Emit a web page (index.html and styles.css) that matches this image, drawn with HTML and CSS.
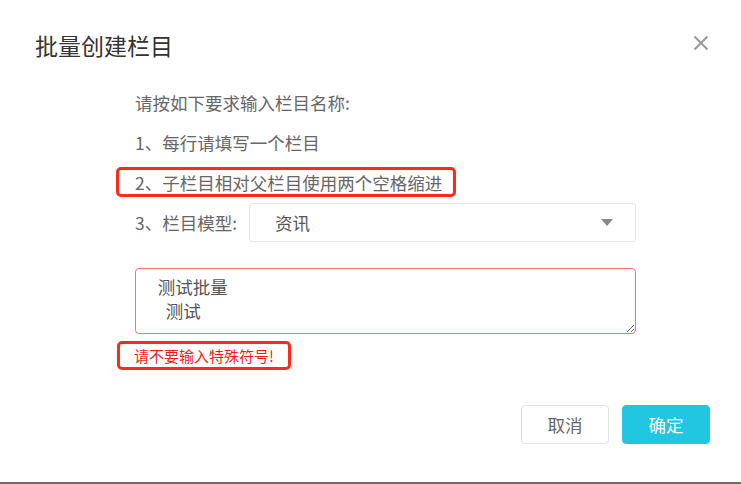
FILE: index.html
```html
<!DOCTYPE html>
<html lang="zh-CN">
<head>
<meta charset="utf-8">
<title>批量创建栏目</title>
<link rel="stylesheet" href="styles.css">
</head>
<body>
<div class="dialog">
  <header class="head">
    <h1 class="title">批量创建栏目</h1>
    <button class="close" aria-label="关闭">
      <svg width="16" height="16" viewBox="0 0 16 16"><path d="M1.5 1.5 L14.5 14.5 M14.5 1.5 L1.5 14.5" stroke="#999" stroke-width="2" fill="none"/></svg>
    </button>
  </header>
  <main class="body">
    <p class="line">请按如下要求输入栏目名称:</p>
    <p class="line">1、每行请填写一个栏目</p>
    <p class="line"><span class="mark mark-line">2、子栏目相对父栏目使用两个空格缩进</span></p>
    <div class="row">
      <span class="label">3、栏目模型:</span>
      <div class="select"><span class="select-text">资讯</span><i class="arrow"></i></div>
    </div>
    <textarea class="ta">  测试批量
    测试</textarea>
    <div class="err"><span class="mark mark-err">请不要输入特殊符号!</span></div>
  </main>
  <footer class="foot">
    <button class="btn btn-cancel">取消</button>
    <button class="btn btn-ok">确定</button>
  </footer>
</div>
</body>
</html>
```
FILE: styles.css
```css
html, body {
  margin: 0;
  padding: 0;
  background: #fff;
}
body {
  font-family: "Noto Sans CJK SC", "Liberation Sans", sans-serif;
  color: #666;
}
.dialog {
  width: 741px;
  height: 484px;
  box-sizing: border-box;
  border-bottom: 2px solid #6b6b6b;
  display: flex;
  flex-direction: column;
}
.head {
  display: flex;
  align-items: center;
  justify-content: space-between;
  padding: 28px 32px 21px 35px;
}
.title {
  margin: 0;
  font-size: 23px;
  font-weight: normal;
  line-height: 34px;
  color: #333;
}
.close {
  border: 0;
  background: none;
  padding: 0;
  width: 16px;
  height: 16px;
  display: flex;
  margin-top: -5px;
}
.body {
  padding-left: 135px;
  width: 501px;
  font-size: 17.5px;
}
.line {
  margin: 0;
  line-height: 40px;
  height: 40px;
}
.mark {
  position: relative;
  display: inline-block;
}
.mark::after {
  content: "";
  position: absolute;
  border: 3px solid #ff2a1a;
  border-radius: 5px;
}
.mark-line::after {
  left: -19px;
  right: -14px;
  top: 4px;
  bottom: 6px;
}
.row {
  display: flex;
  align-items: center;
  height: 39px;
}
.label {
  width: 114px;
}
.select {
  flex: 1;
  height: 39px;
  box-sizing: border-box;
  border: 1px solid #e6e6e6;
  border-radius: 3px;
  display: flex;
  align-items: center;
  justify-content: space-between;
  padding: 0 22px 0 25px;
  color: #555;
}
.arrow {
  width: 0;
  height: 0;
  border-left: 6px solid transparent;
  border-right: 6px solid transparent;
  border-top: 7px solid #888;
}
.ta {
  display: block;
  margin-top: 26px;
  width: 501px;
  height: 66px;
  box-sizing: border-box;
  border: 1px solid #f07373;
  border-radius: 4px;
  padding: 6px 14px;
  font-family: inherit;
  font-size: 17.5px;
  line-height: 24px;
  color: #555;
  resize: vertical;
  outline: none;
}
.err {
  margin-top: 7px;
  margin-left: -17px;
  height: 29px;
  font-size: 15px;
  color: #f01d1d;
}
.mark-err {
  height: 29px;
  line-height: 29px;
  vertical-align: top;
  padding: 0 16px;
}
.mark-err::after {
  left: -1px;
  right: -1px;
  top: 0;
  bottom: 0;
}
.foot {
  display: flex;
  justify-content: flex-end;
  gap: 13px;
  padding-right: 31px;
  margin-top: 35px;
}
.btn {
  height: 39px;
  width: 88px;
  border-radius: 4px;
  font-family: inherit;
  font-size: 17.5px;
  padding: 0;
}
.btn-cancel {
  background: #fff;
  border: 1px solid #e3e3e3;
  color: #666;
}
.btn-ok {
  background: #21c6e0;
  border: 1px solid #21c6e0;
  color: #fff;
}
```
